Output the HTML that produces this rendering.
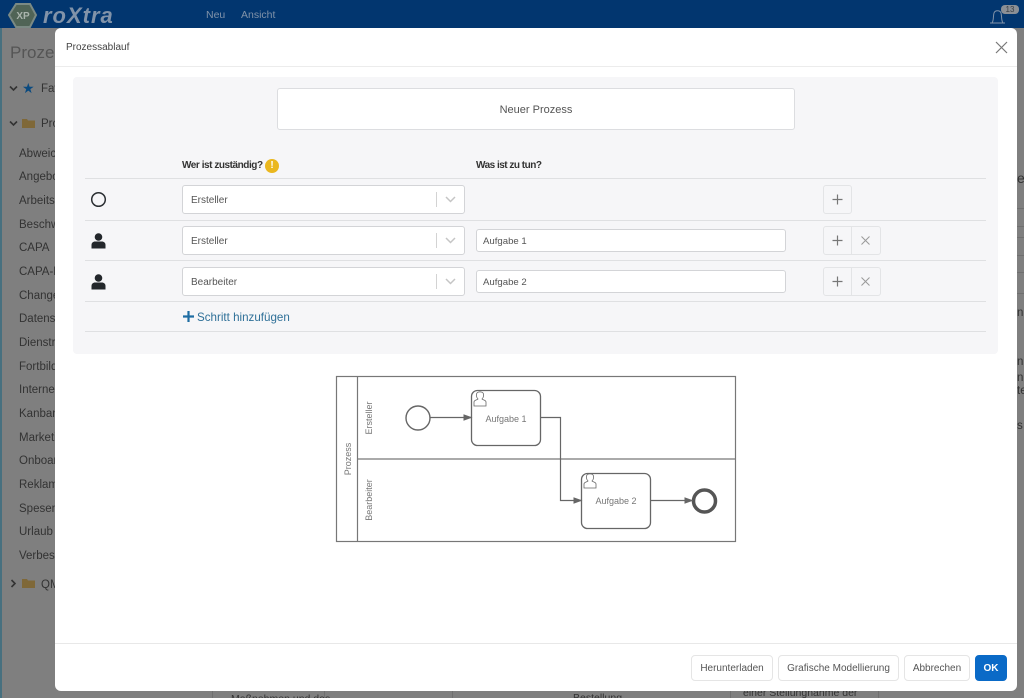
<!DOCTYPE html>
<html lang="de"><head><meta charset="utf-8"><title>Prozessablauf</title>
<style>
html,body{margin:0;padding:0;width:1024px;height:698px;overflow:hidden;background:#fff}
#w{position:absolute;left:0;top:0;width:1024px;height:698px;overflow:hidden;background:#fff;font-family:"Liberation Sans",sans-serif;color:#333}
.a{position:absolute;white-space:nowrap}
.bg{color:#666;font-size:11.5px;line-height:14px;margin-top:1px}
.ln{position:absolute;background:#dedede}
.hl{position:absolute;background:#dfe0e2;height:1px;left:85px;width:901px}
.sel,.inp{position:absolute;background:#fff;border:1px solid #d3d4d7;border-radius:3px;box-sizing:border-box;color:#555}
.sel{left:182px;width:283px;height:29px;font-size:10px;line-height:29px;padding-left:8px}
.sel i{position:absolute;left:253px;top:6px;width:1px;height:15px;background:#d3d3d3}
.sel svg{position:absolute;left:262px;top:10px}
.inp{left:476px;width:310px;height:23px;font-size:9.6px;line-height:23px;padding-left:6px}
.btn{position:absolute;box-sizing:border-box;height:29px;border:1px solid #e3e4e6;background:#f6f6f8;border-radius:3px}
.btn svg{position:absolute;left:7px;top:7px}
.fb{position:absolute;top:655px;height:26px;box-sizing:border-box;border:1px solid #e5e5e5;border-radius:4px;background:#fff;text-align:center;font-size:10px;line-height:25px;color:#555}
</style></head><body><div id="w">
<div class="a" style="left:0;top:0;width:1024px;height:28px;background:#046cde"></div>
<div class="a" style="left:0;top:28px;width:2px;height:670px;background:#8ee0ff"></div>

<div class="a" style="left:10px;top:43px;font-size:17px;line-height:20px;color:#aaa">Prozesse</div>
<svg class="a" style="left:9px;top:85px" width="9" height="7" fill="none" stroke="#666" stroke-width="1.6"><path d="M1 1.5 L4.5 5 L8 1.5"/></svg>
<div class="a" style="left:22px;top:81px;font-size:14px;line-height:14px;color:#1494ff">★</div>
<div class="a bg" style="left:41px;top:81px">Favoriten</div>
<svg class="a" style="left:9px;top:120px" width="9" height="7" fill="none" stroke="#666" stroke-width="1.6"><path d="M1 1.5 L4.5 5 L8 1.5"/></svg>
<svg class="a" style="left:22px;top:118px" width="13" height="10"><path d="M0 1 H5 L6 2.5 H13 V10 H0Z" fill="#ffd070"/></svg>
<div class="a bg" style="left:41px;top:116px">Prozesse</div>
<div class="a bg" style="left:19px;top:146px">Abweichung</div>
<div class="a bg" style="left:19px;top:169px">Angebot</div>
<div class="a bg" style="left:19px;top:193px">Arbeitsschutz</div>
<div class="a bg" style="left:19px;top:217px">Beschwerde</div>
<div class="a bg" style="left:19px;top:240px">CAPA</div>
<div class="a bg" style="left:19px;top:264px">CAPA-Plan</div>
<div class="a bg" style="left:19px;top:288px">Change</div>
<div class="a bg" style="left:19px;top:311px">Datenschutz</div>
<div class="a bg" style="left:19px;top:335px">Dienstreise</div>
<div class="a bg" style="left:19px;top:359px">Fortbildung</div>
<div class="a bg" style="left:19px;top:382px">Interne</div>
<div class="a bg" style="left:19px;top:406px">Kanban</div>
<div class="a bg" style="left:19px;top:430px">Marketing</div>
<div class="a bg" style="left:19px;top:453px">Onboarding</div>
<div class="a bg" style="left:19px;top:477px">Reklamation</div>
<div class="a bg" style="left:19px;top:501px">Spesen</div>
<div class="a bg" style="left:19px;top:524px">Urlaub</div>
<div class="a bg" style="left:19px;top:548px">Verbesserung</div>
<svg class="a" style="left:10px;top:579px" width="7" height="9" fill="none" stroke="#666" stroke-width="1.6"><path d="M1.5 1 L5 4.5 L1.5 8"/></svg>
<svg class="a" style="left:22px;top:578px" width="13" height="10"><path d="M0 1 H5 L6 2.5 H13 V10 H0Z" fill="#ffd070"/></svg>
<div class="a bg" style="left:41px;top:577px">QM</div>
<div class="a bg" style="left:1017px;top:170px;font-size:14px">e</div>
<div class="ln" style="left:1017px;top:208px;width:7px;height:1px"></div>
<div class="ln" style="left:1017px;top:226px;width:7px;height:1px"></div>
<div class="ln" style="left:1017px;top:237px;width:7px;height:1px"></div>
<div class="ln" style="left:1017px;top:255px;width:7px;height:1px"></div>
<div class="ln" style="left:1017px;top:272px;width:7px;height:1px"></div>
<div class="ln" style="left:1017px;top:293px;width:7px;height:1px"></div>
<div class="a bg" style="left:1017px;top:305px">n</div>
<div class="a bg" style="left:1017px;top:354px">n</div>
<div class="a bg" style="left:1017px;top:370px">n</div>
<div class="a bg" style="left:1017px;top:383px">te</div>
<div class="a bg" style="left:1017px;top:418px">s</div>
<div class="ln" style="left:212px;top:691px;width:1px;height:7px"></div>
<div class="ln" style="left:324px;top:691px;width:1px;height:7px"></div>
<div class="ln" style="left:452px;top:691px;width:1px;height:7px"></div>
<div class="ln" style="left:730px;top:691px;width:1px;height:7px"></div>
<div class="ln" style="left:878px;top:691px;width:1px;height:7px"></div>
<div class="a bg" style="left:231px;top:691px;font-size:10.5px">Maßnahmen und das</div>
<div class="a bg" style="left:573px;top:690px;font-size:10.5px">Bestellung</div>
<div class="a bg" style="left:743px;top:685px;font-size:10.5px">einer Stellungnahme der</div>

<div class="a" style="left:0;top:0;width:1024px;height:698px;background:rgba(0,0,0,.5)"></div>

<svg class="a" style="left:8px;top:2px" width="30" height="26"><polygon points="1,13 8,2 22,2 28,13 22,25 8,25" fill="#506456" stroke="#7b8a84" stroke-width="2"/><text x="15" y="17" text-anchor="middle" font-family="Liberation Sans" font-size="10" font-weight="700" fill="#aab4ad">XP</text></svg>
<div class="a" style="left:43px;top:3px;font-size:22px;line-height:25px;font-weight:700;font-style:italic;letter-spacing:1px;color:#8193a9">roXtra</div>
<div class="a" style="left:206px;top:9px;font-size:10.5px;line-height:13px;color:#8193a9">Neu</div>
<div class="a" style="left:241px;top:9px;font-size:10.5px;line-height:13px;color:#8193a9">Ansicht</div>
<svg class="a" style="left:988px;top:5px" width="20" height="20" fill="none" stroke="#8193a9"><path d="M2 18 H17 M4 18 C6 15 5 11 6 8 C7 5 12 5 13 8 C14 11 13 15 15 18"/></svg>
<div class="a" style="left:1001px;top:5px;width:18px;height:9px;background:#8b8f95;border-radius:4px;color:#3a3f45;font-size:8px;line-height:9px;text-align:center">13</div>

<div class="a" style="left:55px;top:28px;width:962px;height:663px;background:#fff;border-radius:6px"></div>
<div class="a" style="left:66px;top:41px;font-size:10px;line-height:13px;color:#444">Prozessablauf</div>
<svg class="a" style="left:995px;top:41px" width="13" height="13" stroke="#777" stroke-width="1.2"><path d="M1 1 L12 12 M12 1 L1 12"/></svg>
<div class="a" style="left:55px;top:66px;width:962px;height:1px;background:#ececec"></div>
<div class="a" style="left:73px;top:77px;width:925px;height:277px;background:#f6f6f8;border-radius:4px"></div>
<div class="a" style="left:277px;top:88px;width:518px;height:42px;box-sizing:border-box;background:#fff;border:1px solid #dcdde0;border-radius:3px;text-align:center;font-size:11px;line-height:43px;color:#555">Neuer Prozess</div>
<div class="a" style="left:182px;top:159px;font-size:10px;letter-spacing:-.45px;line-height:13px;font-weight:700;color:#333">Wer ist zuständig?</div>
<div class="a" style="left:265px;top:159px;width:14px;height:14px;border-radius:50%;background:#eab71f;color:#fff;font-size:10px;font-weight:700;line-height:14px;text-align:center">!</div>
<div class="a" style="left:476px;top:159px;font-size:10px;letter-spacing:-.5px;line-height:13px;font-weight:700;color:#333">Was ist zu tun?</div>
<div class="hl" style="top:178px"></div><div class="hl" style="top:220px"></div><div class="hl" style="top:260px"></div><div class="hl" style="top:301px"></div><div class="hl" style="top:331px"></div>
<svg class="a" style="left:90px;top:191px" width="17" height="17" fill="none" stroke="#2b2f33" stroke-width="1.5"><circle cx="8.5" cy="8.5" r="6.8"/></svg>
<svg class="a" style="left:91px;top:233px" width="15" height="16" fill="#23272b"><circle cx="7.5" cy="4" r="3.8"/><path d="M.5 15.5 V12 C.5 9.5 2.5 8.5 4 8.5 H11 C12.5 8.5 14.5 9.5 14.5 12 V15.5Z"/></svg>
<svg class="a" style="left:91px;top:274px" width="15" height="16" fill="#23272b"><circle cx="7.5" cy="4" r="3.8"/><path d="M.5 15.5 V12 C.5 9.5 2.5 8.5 4 8.5 H11 C12.5 8.5 14.5 9.5 14.5 12 V15.5Z"/></svg>
<div class="sel" style="top:185px">Ersteller<i></i><svg width="11" height="7" fill="none" stroke="#c5c5c5" stroke-width="1.5"><path d="M1 1 L5.5 5.5 L10 1"/></svg></div>
<div class="sel" style="top:226px">Ersteller<i></i><svg width="11" height="7" fill="none" stroke="#c5c5c5" stroke-width="1.5"><path d="M1 1 L5.5 5.5 L10 1"/></svg></div>
<div class="sel" style="top:267px">Bearbeiter<i></i><svg width="11" height="7" fill="none" stroke="#c5c5c5" stroke-width="1.5"><path d="M1 1 L5.5 5.5 L10 1"/></svg></div>
<div class="inp" style="top:229px">Aufgabe 1</div>
<div class="inp" style="top:270px">Aufgabe 2</div>
<div class="btn" style="left:823px;top:185px;width:29px"><svg width="13" height="13" stroke="#777" stroke-width="1.2"><path d="M6.5 1.5 V11.5 M1.5 6.5 H11.5"/></svg></div>
<div class="btn" style="left:823px;top:226px;width:29px;border-radius:3px 0 0 3px"><svg width="13" height="13" stroke="#777" stroke-width="1.2"><path d="M6.5 1.5 V11.5 M1.5 6.5 H11.5"/></svg></div>
<div class="btn" style="left:851px;top:226px;width:30px;border-radius:0 3px 3px 0"><svg width="13" height="13" stroke="#999"><path d="M2.5 2.5 L10.5 10.5 M10.5 2.5 L2.5 10.5"/></svg></div>
<div class="btn" style="left:823px;top:267px;width:29px;border-radius:3px 0 0 3px"><svg width="13" height="13" stroke="#777" stroke-width="1.2"><path d="M6.5 1.5 V11.5 M1.5 6.5 H11.5"/></svg></div>
<div class="btn" style="left:851px;top:267px;width:30px;border-radius:0 3px 3px 0"><svg width="13" height="13" stroke="#999"><path d="M2.5 2.5 L10.5 10.5 M10.5 2.5 L2.5 10.5"/></svg></div>
<svg class="a" style="left:183px;top:311px" width="11" height="11" stroke="#1f6da3" stroke-width="2.2"><path d="M5.5 0 V11 M0 5.5 H11"/></svg>
<div class="a" style="left:197px;top:310px;font-size:11.6px;line-height:15px;color:#2f7098">Schritt hinzufügen</div>

<svg class="a" style="left:330px;top:370px" width="420" height="180" font-family="Liberation Sans" fill="none" stroke="#666">
<rect x="6.5" y="6.5" width="399" height="165" stroke="#777" stroke-width="1.2"/>
<path d="M27.5 6.5 V171.5 M27.5 89 H405.5" stroke="#777" stroke-width="1.2"/>
<circle cx="88" cy="48" r="12" stroke-width="1.4"/>
<rect x="141.5" y="20.5" width="69" height="55" rx="6" stroke-width="1.3"/>
<rect x="251.5" y="103.5" width="69" height="55" rx="6" stroke-width="1.3"/>
<circle cx="374.5" cy="131" r="11" stroke="#555" stroke-width="3.5"/>
<path d="M100 47.5 H141 M210.5 47.5 H230.5 V130.5 H251.5 M320.5 130.5 H362" stroke-width="1.2"/>
<path d="M141 47.5 L134 45 V50Z M251 130.5 L244 128 V133Z M362 130.5 L355 128 V133Z" fill="#666"/>
<path transform="translate(0,1)" d="M144 35 V31 C144 29 147 29 148 28 C146 26 146 23 147 22 C148 20.5 152 20.5 153 22 C154 23 154 26 152 28 C153 29 156 29 156 31 V35Z" stroke-width=".8" fill="#fff"/>
<path d="M254 118 V114 C254 112 257 112 258 111 C256 109 256 106 257 105 C258 103.5 262 103.5 263 105 C264 106 264 109 262 111 C263 112 266 112 266 114 V118Z" stroke-width=".8" fill="#fff"/>
<g fill="#777" stroke="none" font-size="9">
<text x="176" y="52" text-anchor="middle">Aufgabe 1</text>
<text x="286" y="134" text-anchor="middle">Aufgabe 2</text>
<text transform="translate(21,89) rotate(-90)" text-anchor="middle">Prozess</text>
<text transform="translate(42,48) rotate(-90)" text-anchor="middle">Ersteller</text>
<text transform="translate(42,130) rotate(-90)" text-anchor="middle">Bearbeiter</text>
</g></svg>

<div class="a" style="left:55px;top:643px;width:962px;height:1px;background:#e8e8e8"></div>
<div class="fb" style="left:691px;width:82px">Herunterladen</div>
<div class="fb" style="left:778px;width:121px">Grafische Modellierung</div>
<div class="fb" style="left:904px;width:66px">Abbrechen</div>
<div class="fb" style="left:975px;width:32px;background:#0a6ac7;border-color:#0a6ac7;color:#fff;font-weight:700">OK</div>
</div></body></html>
